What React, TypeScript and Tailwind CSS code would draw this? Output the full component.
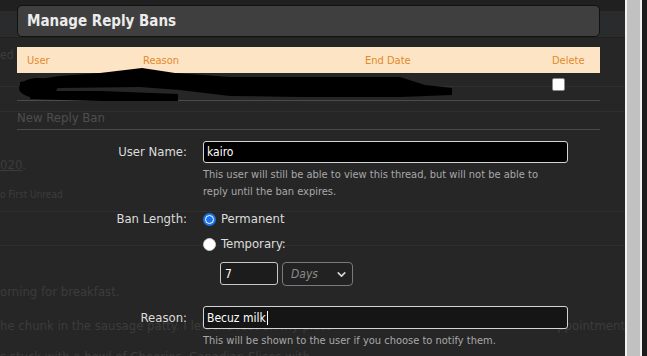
import { ChevronDown } from "lucide-react";

export default function App() {
  return (
    <div className="flex h-[356px] w-[647px] overflow-hidden bg-[#262626] font-['DejaVu_Sans_Condensed','DejaVu_Sans',sans-serif]">
      <div className="relative flex-1 overflow-hidden">
        {/* Page behind the overlay */}
        <div className="flex flex-col text-[#3c3c3c]">
          <div className="h-[11px] bg-[#202020]"></div>
          <div className="h-[27px] border-b border-[#202020] bg-[#2a2b2d]"></div>
          <div className="h-[49px] border-b border-[#2f2f2f] pt-[8px] text-[12px]">ed</div>
          <div className="h-[25px] border-b border-[#2f2f2f]"></div>
          <div className="h-[100px] border-b border-[#2f2f2f] pt-[43px] text-[13px]">
            <span className="underline">020</span>.
            <div className="mt-[12px] text-[10px]">o First Unread</div>
          </div>
          <div className="h-[34px] border-b border-[#2f2f2f]"></div>
          <div className="pt-[36px] text-[13px] whitespace-nowrap">orning for breakfast.</div>
          <div className="mt-[14px] flex justify-between text-[13px] whitespace-nowrap">
            <span>he chunk in the sausage patty. I left the rest on my plate</span>
            <span>ppointment</span>
          </div>
          <div className="mt-[12px] text-[13px] whitespace-nowrap">s stuck with a bowl of Cheerios. Canadian Slices with</div>
        </div>

        {/* Manage Reply Bans overlay */}
        <div className="absolute left-[17px] top-[5px] w-[583px]">
          <div className="flex h-[32px] items-center rounded-[5px] border border-[#111] bg-[#3f3f3f] px-[9px] text-[15px] font-bold text-[#ececec]">
            Manage Reply Bans
          </div>

          <div className="mt-[10px] grid h-[26px] grid-cols-[116px_222px_187px_1fr] items-center bg-[#fde4c4] pt-[2px] text-[11px] text-[#e3892a]">
            <div className="pl-[10px]">User</div>
            <div className="pl-[10px]">Reason</div>
            <div className="pl-[10px]">End Date</div>
            <div className="pl-[10px]">Delete</div>
          </div>

          <div className="relative grid h-[28px] grid-cols-[116px_222px_187px_1fr] items-center border-b border-[#4a4a4a]">
            <div></div>
            <div></div>
            <div></div>
            <div className="pb-[4px] pl-[10px]">
              <div className="h-[13px] w-[13px] rounded-[2px] border border-[#8a8a8a] bg-white"></div>
            </div>
            <svg className="absolute left-[-17px] top-[-7px]" width="460" height="40" viewBox="0 66 460 40">
              <path
                d="M20 82 L60 76 L100 73 L142 68 L175 73 L230 77 L400 77 L425 85 L452 88 L452 95 L400 97 L300 97 L230 96 L180 90 L140 87 L60 88 L20 92 Z"
                fill="#000"
              />
              <path d="M30 91 L100 91 L178 94 L178 101 L100 101 L30 99 Z" fill="#000" />
              <ellipse cx="38" cy="88" rx="19" ry="10" fill="#000" />
            </svg>
          </div>

          <div className="flex h-[29px] items-center border-b border-[#4a4a4a] pt-[6px] text-[13px] text-[#4e4e4e]">
            New Reply Ban
          </div>

          <div className="mt-[11px] grid grid-cols-[170px_1fr] gap-x-[16px] text-[13px] text-[#dcdcdc]">
            <div className="flex h-[22px] items-center justify-end">User Name:</div>
            <div>
              <div className="flex h-[22px] w-[365px] items-center rounded-[3px] border border-[#d4d4d4] bg-black px-[3px] text-[12px] text-white">
                kairo
              </div>
              <p className="mt-[3px] text-[11px] leading-[17px] text-[#a8a8a8]">
                This user will still be able to view this thread, but will not be able to
                <br />
                reply until the ban expires.
              </p>
            </div>

            <div className="mt-[9px] flex h-[20px] items-center justify-end">Ban Length:</div>
            <div className="mt-[9px] flex flex-col">
              <label className="flex h-[20px] items-center gap-[5px]">
                <span className="flex h-[13px] w-[13px] items-center justify-center rounded-full bg-[#1a73e8]">
                  <span className="h-[9px] w-[9px] rounded-full border-[1.5px] border-white bg-[#1a73e8]"></span>
                </span>
                Permanent
              </label>
              <label className="mt-[5px] flex h-[20px] items-center gap-[5px]">
                <span className="h-[13px] w-[13px] rounded-full border border-[#cfcfcf] bg-white"></span>
                Temporary:
              </label>
              <div className="mt-[8px] flex gap-[4px] pl-[17px]">
                <div className="flex h-[23px] w-[58px] items-center rounded-[3px] border border-[#c8c8c8] bg-[#1c1c1c] px-[4px] text-[12px] text-white">
                  7
                </div>
                <div className="flex h-[24px] w-[71px] items-center justify-between rounded-[4px] border border-[#7a7a7a] bg-[#222] pl-[8px] pr-[4px] text-[12px] italic text-[#8c8c8c]">
                  Days
                  <ChevronDown size={13} strokeWidth={3} className="text-[#d8d8d8]" />
                </div>
              </div>
            </div>

            <div className="mt-[20px] flex h-[23px] items-center justify-end">Reason:</div>
            <div className="mt-[20px]">
              <div className="flex h-[23px] w-[365px] items-center rounded-[3px] border border-[#d4d4d4] bg-[#151515] px-[3px] text-[12px] text-white">
                Becuz milk
                <span className="ml-[1px] h-[14px] w-[1px] bg-white"></span>
              </div>
              <p className="mt-[3px] text-[11px] leading-[17px] text-[#a8a8a8]">
                This will be shown to the user if you choose to notify them.
              </p>
            </div>
          </div>
        </div>
      </div>

      <div className="w-[17px] bg-[#f0f0f0] px-[2px]">
        <div className="h-full bg-[#c1c1c1]"></div>
      </div>
      <div className="w-[5px] bg-[#1c1c1c]"></div>
    </div>
  );
}
